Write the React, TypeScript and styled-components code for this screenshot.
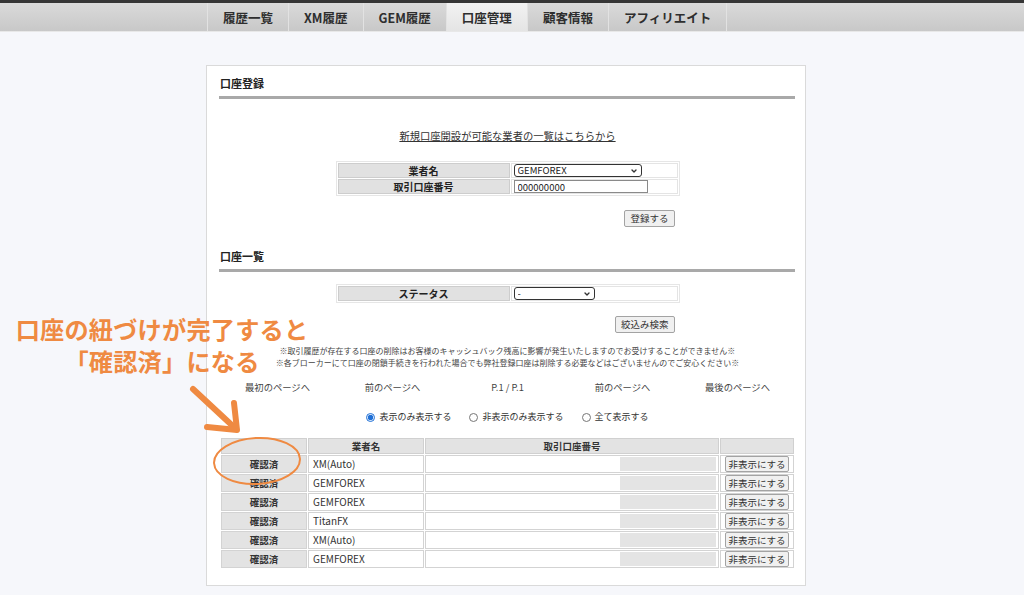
import styled, { createGlobalStyle } from "styled-components";
import { FiChevronDown } from "react-icons/fi";

const GlobalStyle = createGlobalStyle`
  html, body {
    margin: 0;
    padding: 0;
  }
  body {
    background: #f6f7fb;
    font-family: "Noto Sans CJK JP", "Noto Sans", sans-serif;
    color: #333;
  }
`;

const Screen = styled.div`
  position: relative;
  width: 1024px;
  height: 595px;
  overflow: hidden;
`;

const TopBar = styled.header`
  height: 28px;
  border-top: 3px solid #363636;
  background: linear-gradient(#dadada, #c8c8c8);
  box-shadow: 0 1px 0 #e8e8e8;
`;

const Container = styled.div`
  width: 600px;
  margin: 0 auto;
  padding-right: 12px;
`;

const Nav = styled.nav`
  display: flex;
  height: 28px;
  margin-left: 1px;
  border-left: 1px solid #e2e2e2;
`;

const NavItem = styled.a<{ $active?: boolean }>`
  display: flex;
  align-items: center;
  padding: 0 15px;
  font-size: 12.5px;
  font-weight: 700;
  color: #2e2e2e;
  text-decoration: none;
  border-right: 1px solid #e2e2e2;
  background: ${(p) => (p.$active ? "linear-gradient(#f2f2f2, #e4e4e4)" : "transparent")};
`;

const Card = styled.section`
  box-sizing: border-box;
  width: 600px;
  height: 521px;
  margin-top: 34px;
  padding: 10px 10px 0 13px;
  background: #fff;
  border: 1px solid #dadada;
`;

const SectionTitle = styled.h2<{ $gap?: number }>`
  margin: ${(p) => p.$gap ?? 0}px 0 0;
  font-size: 11px;
  line-height: 14px;
  font-weight: 700;
  color: #222;
`;

const Rule = styled.hr`
  margin: 6px 0 0 -1px;
  height: 3px;
  border: 0;
  background: #a9a9a9;
`;

const LinkRow = styled.div`
  margin-top: 30px;
  text-align: center;
  font-size: 10.3px;
  line-height: 14px;

  a {
    color: #333;
    text-decoration: underline;
  }
`;

const FormTable = styled.table<{ $top: number }>`
  margin: ${(p) => p.$top}px auto 0;
  width: 344px;
  border-collapse: separate;
  border-spacing: 1px;
  border: 1px solid #e6e6e6;

  th {
    width: 170px;
    height: 13px;
    padding: 0;
    background: #e1e1e1;
    border: 1px solid #cdcdcd;
    font-size: 10px;
    font-weight: 700;
    line-height: 12px;
    color: #222;
  }

  td {
    padding: 0 2px;
    height: 13px;
    border: 1px solid #e4e4e4;
    line-height: 0;
  }
`;

const SelectBox = styled.span<{ $width: number }>`
  position: relative;
  display: inline-block;
  width: ${(p) => p.$width}px;

  select {
    box-sizing: border-box;
    appearance: none;
    width: 100%;
    height: 13px;
    padding: 0 0 0 3px;
    border: 1px solid #333;
    border-radius: 3px;
    background: #fff;
    font-family: inherit;
    font-size: 9.5px;
    line-height: 11px;
    color: #222;
  }

  svg {
    position: absolute;
    right: 4px;
    top: 3px;
    pointer-events: none;
  }
`;

const TextInput = styled.input`
  box-sizing: border-box;
  width: 134px;
  height: 13px;
  padding: 0 3px;
  border: 1px solid #8a8a8a;
  font-family: inherit;
  font-size: 9.5px;
  color: #222;
`;

const ButtonRow = styled.div<{ $top: number }>`
  width: 344px;
  margin: ${(p) => p.$top}px auto 0;
  padding-right: 5px;
  box-sizing: border-box;
  display: flex;
  justify-content: flex-end;
`;

const Button = styled.button<{ $width?: number }>`
  box-sizing: border-box;
  height: 17px;
  ${(p) => (p.$width ? `width: ${p.$width}px;` : "")}
  padding: 0 5px;
  border: 1px solid #a3a3a3;
  border-radius: 2px;
  background: #f0f0f0;
  font-family: inherit;
  font-size: 9.5px;
  line-height: 15px;
  color: #333;
  white-space: nowrap;
`;

const Notes = styled.div`
  margin-top: 12px;
  text-align: center;
  font-size: 8px;
  line-height: 12px;
  color: #444;
  white-space: nowrap;
`;

const Pager = styled.div`
  display: grid;
  grid-template-columns: repeat(5, 1fr);
  margin-top: 11px;
  font-size: 9.3px;
  line-height: 14px;
  color: #444;
  text-align: center;
`;

const RadioGroup = styled.div`
  display: flex;
  justify-content: center;
  gap: 18px;
  margin-top: 16px;
  font-size: 9px;
  line-height: 14px;
  color: #333;
`;

const RadioLabel = styled.label`
  display: inline-flex;
  align-items: center;
  gap: 4px;

  input {
    width: 9px;
    height: 9px;
    margin: 0;
    accent-color: #1f6fd6;
  }
`;

const AccountTable = styled.table`
  width: 100%;
  margin-top: 13px;
  border-collapse: separate;
  border-spacing: 1px;
  font-size: 9.5px;
  color: #333;

  th {
    height: 14px;
    padding: 0;
    background: #e3e3e3;
    border: 1px solid #d0d0d0;
    font-weight: 700;
    line-height: 12px;
  }

  td {
    height: 16px;
    padding: 0 2px;
    border: 1px solid #d3d3d3;
    line-height: 14px;
  }
`;

const StatusCell = styled.td`
  width: 80px;
  text-align: center;
  font-weight: 700;
  background: #e3e3e3;
`;

const NameCell = styled.td`
  width: 108px;
  font-size: 10px;
  padding-left: 4px !important;
`;

const NumberCell = styled.td`
  text-align: right;
  line-height: 0 !important;
`;

const Masked = styled.span`
  display: inline-block;
  width: 96px;
  height: 14px;
  background: #e4e4e4;
  vertical-align: middle;
`;

const ActionCell = styled.td`
  width: 68px;
  text-align: center;
  line-height: 0 !important;

  button {
    height: 16px;
    padding: 0;
    line-height: 14px;
    vertical-align: middle;
  }
`;

const Annotation = styled.div`
  position: absolute;
  left: 13px;
  top: 313px;
  width: 298px;
  text-align: center;
  font-size: 24.2px;
  line-height: 32px;
  font-weight: 700;
  color: #ef8a42;
  letter-spacing: 0.2px;
`;

const Marks = styled.svg`
  position: absolute;
  left: 0;
  top: 0;
  pointer-events: none;
`;

const accounts = ["XM(Auto)", "GEMFOREX", "GEMFOREX", "TitanFX", "XM(Auto)", "GEMFOREX"];

const tabs = ["履歴一覧", "XM履歴", "GEM履歴", "口座管理", "顧客情報", "アフィリエイト"];

export default function App() {
  return (
    <Screen>
      <GlobalStyle />
      <TopBar>
        <Container>
          <Nav>
            {tabs.map((t) => (
              <NavItem key={t} href="#" $active={t === "口座管理"}>
                {t}
              </NavItem>
            ))}
          </Nav>
        </Container>
      </TopBar>

      <Container>
        <Card>
          <SectionTitle>口座登録</SectionTitle>
          <Rule />
          <LinkRow>
            <a href="#">新規口座開設が可能な業者の一覧はこちらから</a>
          </LinkRow>

          <FormTable $top={18}>
            <tbody>
              <tr>
                <th>業者名</th>
                <td>
                  <SelectBox $width={128}>
                    <select defaultValue="GEMFOREX">
                      <option>GEMFOREX</option>
                      <option>XM</option>
                      <option>TitanFX</option>
                    </select>
                    <FiChevronDown size={8} strokeWidth={4} />
                  </SelectBox>
                </td>
              </tr>
              <tr>
                <th>取引口座番号</th>
                <td>
                  <TextInput defaultValue="000000000" />
                </td>
              </tr>
            </tbody>
          </FormTable>
          <ButtonRow $top={14}>
            <Button type="button">登録する</Button>
          </ButtonRow>

          <SectionTitle $gap={22}>口座一覧</SectionTitle>
          <Rule />

          <FormTable $top={12}>
            <tbody>
              <tr>
                <th>ステータス</th>
                <td>
                  <SelectBox $width={81}>
                    <select defaultValue="-">
                      <option>-</option>
                      <option>確認済</option>
                      <option>未確認</option>
                    </select>
                    <FiChevronDown size={8} strokeWidth={4} />
                  </SelectBox>
                </td>
              </tr>
            </tbody>
          </FormTable>
          <ButtonRow $top={13}>
            <Button type="button">絞込み検索</Button>
          </ButtonRow>

          <Notes>
            ※取引履歴が存在する口座の削除はお客様のキャッシュバック残高に影響が発生いたしますのでお受けすることができません※
            <br />
            ※各ブローカーにて口座の閉鎖手続きを行われた場合でも弊社登録口座は削除する必要などはございませんのでご安心ください※
          </Notes>

          <Pager>
            <span>最初のページへ</span>
            <span>前のページへ</span>
            <span>P.1 / P.1</span>
            <span>前のページへ</span>
            <span>最後のページへ</span>
          </Pager>

          <RadioGroup>
            <RadioLabel>
              <input type="radio" name="show" defaultChecked />
              表示のみ表示する
            </RadioLabel>
            <RadioLabel>
              <input type="radio" name="show" />
              非表示のみ表示する
            </RadioLabel>
            <RadioLabel>
              <input type="radio" name="show" />
              全て表示する
            </RadioLabel>
          </RadioGroup>

          <AccountTable>
            <thead>
              <tr>
                <th></th>
                <th>業者名</th>
                <th>取引口座番号</th>
                <th></th>
              </tr>
            </thead>
            <tbody>
              {accounts.map((name, i) => (
                <tr key={i}>
                  <StatusCell>確認済</StatusCell>
                  <NameCell>{name}</NameCell>
                  <NumberCell>
                    <Masked />
                  </NumberCell>
                  <ActionCell>
                    <Button type="button" $width={64}>
                      非表示にする
                    </Button>
                  </ActionCell>
                </tr>
              ))}
            </tbody>
          </AccountTable>
        </Card>
      </Container>

      <Annotation>
        口座の紐づけが完了すると
        <br />
        「確認済」になる
      </Annotation>
      <Marks width="320" height="500" viewBox="0 0 320 500">
        <g fill="none" stroke="#ef8a42" strokeLinecap="round" strokeLinejoin="round">
          <path d="M193 389 L236 429" strokeWidth="6" />
          <path d="M207 427 L237 430 L234 403" strokeWidth="6" />
          <ellipse cx="257" cy="461" rx="43" ry="23" strokeWidth="2" transform="rotate(-3 257 461)" />
        </g>
      </Marks>
    </Screen>
  );
}
